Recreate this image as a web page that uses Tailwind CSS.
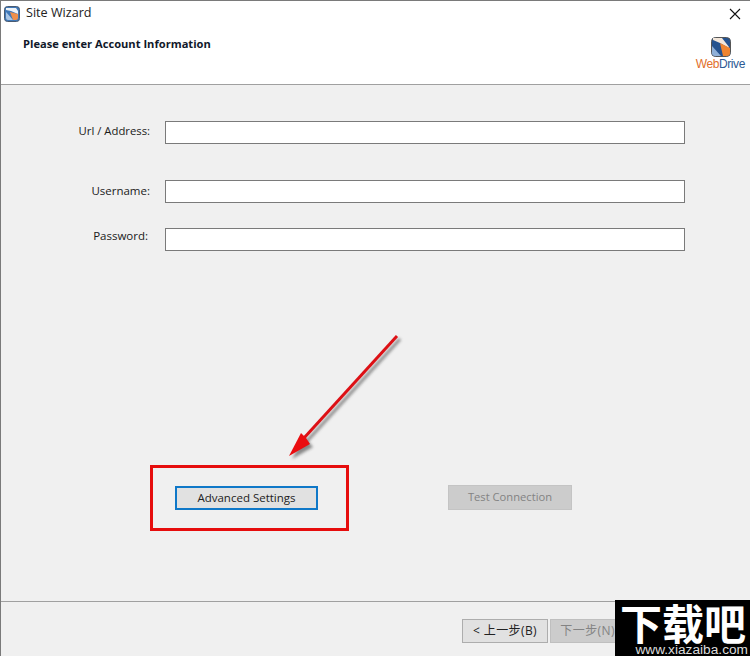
<!DOCTYPE html>
<html lang="en">
<head>
<meta charset="UTF-8">
<title>Site Wizard</title>
<script src="https://cdn.jsdelivr.net/npm/@tailwindcss/browser@4"></script>
</head>
<body class="bg-white">
<div class="relative w-[750px] h-[656px] overflow-hidden flex flex-col border-t border-l border-[#7a7a7a] bg-[#f0f0f0] text-[#1a1a1a] font-['Open_Sans','Noto_Sans_CJK_SC',sans-serif] text-[11.5px]">

  <!-- header -->
  <div class="h-[84px] shrink-0 bg-white border-b border-[#a0a0a0] flex flex-col">
    <div class="h-[25px] flex items-center pl-[3px] pr-[9px] gap-[6px]">
      <svg width="16" height="16" viewBox="0 0 16 16">
        <rect x="0.5" y="0.5" width="15" height="15" rx="3" fill="#3f78b8" stroke="#4a5a70"/>
        <path d="M2 2h10l2 3v3L7 5 2 4z" fill="#eef3f8"/>
        <path d="M6 6l8 2v4a2 2 0 0 1-2 2H9z" fill="#ef8f4a"/>
        <path d="M2 6l7 8H4a2 2 0 0 1-2-2z" fill="#a9c6e6"/>
      </svg>
      <span class="text-[12.6px] text-[#222] flex-1 leading-none">Site Wizard</span>
      <svg width="12" height="12" viewBox="0 0 12 12"><path d="M1 1l10 10M11 1L1 11" stroke="#111" stroke-width="1.1" fill="none"/></svg>
    </div>
    <div class="flex justify-between pl-[22px] pr-[5px]">
      <span class="font-bold text-[#10182a] text-[11.15px] mt-[12px] leading-none">Please enter Account Information</span>
      <div class="flex flex-col items-end mt-[11px]">
        <svg width="20" height="20" viewBox="0 0 20 20" class="mr-[14px]">
          <rect x="0.5" y="0.5" width="19" height="19" rx="4" fill="#24528f" stroke="#555"/>
          <path d="M2 1h9l7 9v1L9 6 2 3z" fill="#f2e6da"/>
          <path d="M9 6l10 5v5a3 3 0 0 1-3 3h-4z" fill="#ee8430"/>
          <path d="M1 9l9 10H4a3 3 0 0 1-3-3z" fill="#8fb0d8"/>
        </svg>
        <span class="font-['Liberation_Sans',sans-serif] text-[12px] leading-none mt-[1px] tracking-[-0.4px]"><span class="text-[#e2702a]">Web</span><span class="text-[#2c5a94]">Drive</span></span>
      </div>
    </div>
  </div>

  <!-- body -->
  <div class="h-[516px] shrink-0 flex flex-col">
    <div class="mt-[36px] flex items-start">
      <label class="w-[149px] text-right pt-[1px] leading-[18px] text-[11.3px]">Url / Address:</label>
      <div class="ml-[15px] w-[520px] h-[23px] bg-white border border-[#7a7a7a]"></div>
    </div>
    <div class="mt-[36px] flex items-start">
      <label class="w-[149px] text-right pt-[2px] leading-[18px]">Username:</label>
      <div class="ml-[15px] w-[520px] h-[23px] bg-white border border-[#7a7a7a]"></div>
    </div>
    <div class="mt-[25px] flex items-start">
      <label class="w-[147px] mr-[2px] text-right leading-[16px]">Password:</label>
      <div class="ml-[15px] w-[520px] h-[23px] bg-white border border-[#7a7a7a]"></div>
    </div>
    <div class="mt-[234px] ml-[174px] flex items-start">
      <button class="w-[143px] h-[24px] mt-[1px] bg-[#e1e1e1] border-2 border-[#0f78c8] text-[#222] leading-none">Advanced Settings</button>
      <button class="ml-[130px] w-[124px] h-[25px] pb-[1px] bg-[#cccccc] border border-[#c4c4c4] text-[#838383] text-[11.2px] leading-none">Test Connection</button>
    </div>
  </div>

  <!-- footer -->
  <div class="flex-1 border-t border-[#a0a0a0] pt-[17px] pl-[461px] flex items-start gap-[2px] text-[12px]">
    <button class="w-[86px] h-[24px] bg-[#e1e1e1] border border-[#adadad] text-[#222] leading-none tracking-[0.4px]">&lt; 上一步(B)</button>
    <button class="w-[86px] h-[24px] bg-[#cccccc] border border-[#bfbfbf] text-[#838383] leading-none tracking-[0.4px] whitespace-nowrap">下一步(N) &gt;</button>
  </div>

  <!-- annotation overlays -->
  <div class="absolute left-[149px] top-[464px] w-[199px] h-[66px] border-[3px] border-[#e60d0d]"></div>
  <svg class="absolute left-[269px] top-[319px]" width="140" height="145" viewBox="0 0 140 145">
    <defs><filter id="s" x="-20%" y="-20%" width="140%" height="140%"><feGaussianBlur stdDeviation="1.5"/></filter></defs>
    <g transform="translate(3 3)" opacity="0.55" filter="url(#s)">
      <path d="M127 16L34 118" stroke="#333" stroke-width="3" fill="none"/>
      <path d="M19 136L31 114 40 124z" fill="#333"/>
    </g>
    <path d="M127 16L34 118" stroke="#dd1015" stroke-width="3" fill="none"/>
    <path d="M19 136L31 113 36 118 40 124z" fill="#ea0d10"/>
  </svg>

  <!-- watermark -->
  <div class="absolute left-[614px] top-[599px] w-[136px] h-[57px] bg-black flex flex-col items-center text-white overflow-hidden">
    <span class="shrink-0 font-['Noto_Sans_CJK_SC',sans-serif] font-bold text-[42px] leading-[43px] whitespace-nowrap">下载吧</span>
    <span class="shrink-0 self-end pr-[3px] font-['Liberation_Sans',sans-serif] text-[13.7px] leading-[14px] text-[#ddd] whitespace-nowrap">www.xiazaiba.com</span>
  </div>
</div>
</body>
</html>
